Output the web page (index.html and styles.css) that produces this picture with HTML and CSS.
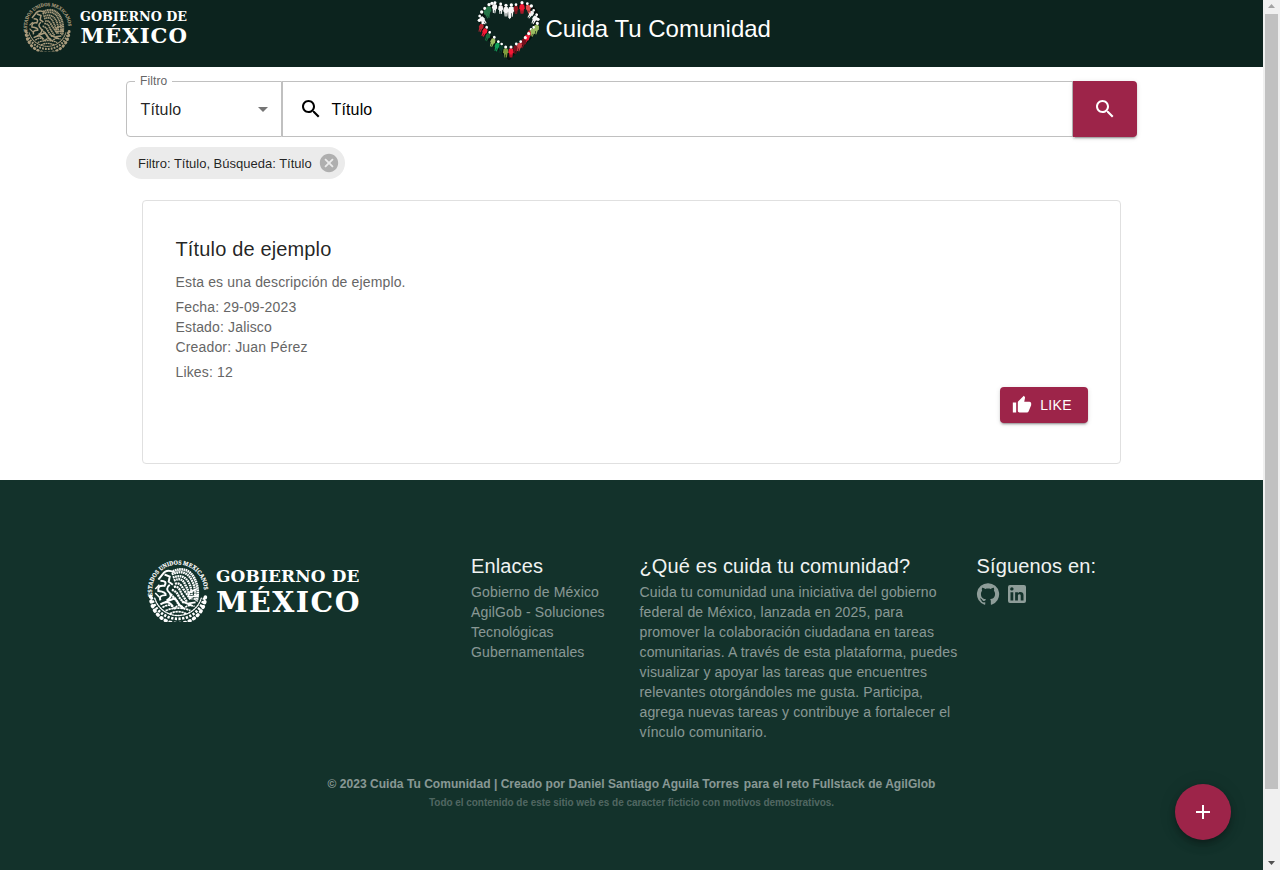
FILE: index.html
```
<!DOCTYPE html>
<html lang="es">
<head>
<meta charset="utf-8">
<title>Cuida Tu Comunidad</title>
<link rel="stylesheet" href="styles.css">
</head>
<body>
<svg class="defs" width="0" height="0" aria-hidden="true">
  <defs>
    <path id="ring" d="M5.400 35A25.200 25.200 0 1 1 54.600 35"/>
    <symbol id="seal" viewBox="0 0 60 60">
      <text class="seal-text"><textPath href="#ring" textLength="84" lengthAdjust="spacingAndGlyphs">ESTADOS UNIDOS MEXICANOS</textPath></text>
      <g fill="none" stroke="currentColor" stroke-linecap="round">
        <path d="M3.500 35A26.500 26.500 0 0 0 56.500 35" stroke-width="3.400" stroke-dasharray=".8 4"/>
        <path d="M4.500 36A26 26 0 0 0 55.500 36" stroke-width="2.600" stroke-dasharray="2.200 1.400" stroke-linecap="butt"/>
        <path d="M7.500 37A23.500 23.500 0 0 0 52.500 37" stroke-width="1.300" stroke-dasharray="1.500 1.200"/>
      </g>
      <g fill="none" stroke="currentColor" stroke-linecap="butt">
        <path d="M25 11Q39 5 46 18Q51 28 48 40" stroke-width="2.600" stroke-dasharray="1.600 .5"/>
        <path d="M24 14Q37 8 43 19Q48 28 46 39M25 17Q35 13 40 21Q44 28 43 38M26 20Q34 16 37 24Q41 31 41 37" stroke-width="2.300" stroke-dasharray="1.700 .55"/>
        <path d="M27 23Q32 21 35 28L42 38M26 26Q31 25 33 32L39 41M24 29Q29 30 31 36L36 42M23 33L30 41" stroke-width="2.200" stroke-dasharray="2 .6"/>
        <path d="M26 12Q19 8 15 14L11 19M17 14L22 16L21 21L25 24M13 20Q20 20 17 25Q10 24 11 30Q19 31 18 34Q11 34 13 39" stroke-width="1.900"/>
        <path d="M22 24Q17 28 22 32Q25 36 19 39M17 41L27 37L32 44M13 43Q21 38 25 45M29 41L35 47M34 40L43 44M40 42L47 41" stroke-width="1.900"/>
        <path d="M15 46Q22 41 27 47Q31 41 36 47Q40 42 46 45M18 49Q30 44 42 49M22 52Q30 48 38 52" stroke-width="1.700" stroke-dasharray="2.300 .6"/>
        <path d="M48 28L40 32M50 34L41 36M12 24L8 28M8 32L12 36" stroke-width="1.500"/>
      </g>
    </symbol>
    <g id="p"><path d="M-7 7Q0 2 7 7L9 19L6 21L4 35H1V25H-1V35H-4L-6 21L-9 19Z"/><circle r="5" fill="#fff"/></g>
    <path id="magnifier" d="M15.500 14h-.79l-.28-.27C15.410 12.590 16 11.110 16 9.500 16 5.910 13.090 3 9.500 3S3 5.910 3 9.500 5.910 16 9.500 16c1.610 0 3.090-.59 4.230-1.570l.27.28v.79l5 4.990L20.490 19l-4.990-5zm-6 0C7.010 14 5 11.990 5 9.500S7.010 5 9.500 5 14 7.010 14 9.500 11.990 14 9.500 14z"/>
  </defs>
</svg>
<div class="window">
  <div class="page">
    <header class="topbar">
      <svg class="gov-small" width="190" height="52" viewBox="0 0 190 52">
        <use href="#seal" x="0" y="2.500" width="49" height="49"/>
        <text class="gov-text" x="57" y="20.500" font-size="13" textLength="107" lengthAdjust="spacingAndGlyphs">GOBIERNO DE</text>
        <text class="gov-text" x="57.500" y="42.800" font-size="21" letter-spacing="1" textLength="107.500" lengthAdjust="spacingAndGlyphs">MÉXICO</text>
      </svg>
      <div class="brand">
        <svg width="63" height="60" viewBox="50 0 189 180">
          <path d="M146 38C120 5 62 14 64 60C66 108 120 142 146 170C170 138 228 108 230 62C231 12 174 5 146 38Z" fill="none" stroke="#06110e" stroke-width="16"/>
          <g fill="#f5f5f5">
            <use href="#p" transform="translate(104 8) rotate(5) scale(.9)"/><use href="#p" transform="translate(121 12) scale(.85)"/><use href="#p" transform="translate(137 16) scale(.95)"/>
            <use href="#p" transform="translate(153 15)"/>
            <use href="#p" transform="translate(220 31) rotate(35) scale(.8)"/><use href="#p" transform="translate(229 44) rotate(25) scale(.85)"/>
            <use href="#p" transform="translate(58 48) rotate(-38) scale(.85)"/>
          </g>
          <path d="M143 26H152V52L148 58L144 52Z" fill="#f5f5f5"/>
          <g fill="#257447"><use href="#p" transform="translate(86 14) rotate(5)"/><use href="#p" transform="translate(73 25) rotate(-22) scale(.9)"/></g>
          <g fill="#92151f"><use href="#p" transform="translate(167 14) scale(.8)"/></g>
          <g fill="#ef1732"><use href="#p" transform="translate(185 8) scale(.95)"/></g>
          <g fill="#df4a4a"><use href="#p" transform="translate(201 11) rotate(-12) scale(.85)"/></g>
          <g fill="#fff"><circle cx="64" cy="36" r="5"/><circle cx="57" cy="61" r="5"/><circle cx="95" cy="10" r="5"/><circle cx="213" cy="18" r="5"/><circle cx="233" cy="58" r="5"/></g>
          <g fill="#bf2632"><use href="#p" transform="translate(67 69) rotate(20) scale(.8)"/><use href="#p" transform="translate(212 88) rotate(20) scale(.8)"/></g>
          <g fill="#f51735"><use href="#p" transform="translate(79 82) rotate(25) scale(.85)"/><use href="#p" transform="translate(205 101) rotate(25) scale(.95)"/></g>
          <g fill="#176a3c"><use href="#p" transform="translate(88 97) rotate(25) scale(.8)"/></g>
          <g fill="#9bbc60"><use href="#p" transform="translate(102 112) rotate(20) scale(.85)"/><use href="#p" transform="translate(231 70) rotate(12) scale(.95)"/><use href="#p" transform="translate(220 82) rotate(12) scale(.8)"/></g>
          <g fill="#12a05a"><use href="#p" transform="translate(114 125) rotate(16) scale(.85)"/></g>
          <g fill="#073c29"><use href="#p" transform="translate(124 132) rotate(8) scale(.8)"/></g>
          <g fill="#7d9c3d"><use href="#p" transform="translate(136 141) scale(.9)"/></g>
          <g fill="#77101c"><use href="#p" transform="translate(195 113) rotate(22) scale(.95)"/><use href="#p" transform="translate(168 132) rotate(8) scale(.85)"/></g>
          <g fill="#cf3d44"><use href="#p" transform="translate(181 125) rotate(15) scale(.85)"/></g>
          <g fill="#f51735"><use href="#p" transform="translate(152 141) scale(.9)"/></g>
        </svg>
        <h1 class="brand-name">Cuida Tu Comunidad</h1>
      </div>
    </header>

    <main class="content">
      <form class="search">
        <fieldset class="select">
          <legend>Filtro</legend>
          <span>Título</span>
          <svg width="24" height="24" viewBox="0 0 24 24"><path d="M7 10l5 5 5-5z" fill="#757575"/></svg>
        </fieldset>
        <div class="query">
          <svg width="24" height="24" viewBox="0 0 24 24"><use href="#magnifier"/></svg>
          <span>Título</span>
        </div>
        <button class="go" type="button"><svg width="24" height="24" viewBox="0 0 24 24" fill="#fff"><use href="#magnifier"/></svg></button>
      </form>
      <div class="chip"><span>Filtro: Título, Búsqueda: Título</span>
        <svg width="22" height="22" viewBox="0 0 24 24" fill="#afafaf"><path d="M12 2C6.470 2 2 6.470 2 12s4.470 10 10 10 10-4.470 10-10S17.530 2 12 2zm5 13.590L15.590 17 12 13.410 8.410 17 7 15.590 10.590 12 7 8.410 8.410 7 12 10.590 15.590 7 17 8.410 13.410 12 17 15.590z"/></svg>
      </div>
      <article class="card">
        <h2>Título de ejemplo</h2>
        <p>Esta es una descripción de ejemplo.</p>
        <p>Fecha: 29-09-2023<br>Estado: Jalisco<br>Creador: Juan Pérez</p>
        <p>Likes: 12</p>
        <button class="like" type="button"><svg width="20" height="20" viewBox="0 0 24 24" fill="#fff"><path d="M1 21h4V9H1v12zm22-11c0-1.100-.9-2-2-2h-6.310l.95-4.570.03-.32c0-.41-.17-.79-.44-1.060L14.170 1 7.590 7.590C7.220 7.950 7 8.450 7 9v10c0 1.100.9 2 2 2h9c.83 0 1.540-.5 1.840-1.220l3.020-7.050c.09-.23.14-.47.14-.73v-2z"/></svg>LIKE</button>
      </article>
    </main>

    <footer class="footer">
      <div class="columns">
        <svg class="gov-large" width="250" height="64" viewBox="0 0 250 64">
          <use href="#seal" x="0" y="0" width="62" height="62"/>
          <text class="gov-text" x="69" y="21.500" font-size="17" textLength="143.500" lengthAdjust="spacingAndGlyphs">GOBIERNO DE</text>
          <text class="gov-text" x="69" y="52" font-size="28.500" letter-spacing="1.500" textLength="145" lengthAdjust="spacingAndGlyphs">MÉXICO</text>
        </svg>
        <section class="links"><h3>Enlaces</h3><a>Gobierno de México</a><a>AgilGob - Soluciones Tecnológicas Gubernamentales</a></section>
        <section><h3>¿Qué es cuida tu comunidad?</h3><p>Cuida tu comunidad una iniciativa del gobierno federal de México, lanzada en 2025, para promover la colaboración ciudadana en tareas comunitarias. A través de esta plataforma, puedes visualizar y apoyar las tareas que encuentres relevantes otorgándoles me gusta. Participa, agrega nuevas tareas y contribuye a fortalecer el vínculo comunitario.</p></section>
        <section><h3>Síguenos en:</h3>
          <div class="social">
            <svg width="24" height="24" viewBox="0 0 24 24"><path d="M12 1.270a11 11 0 00-3.480 21.460c.55.09.73-.28.73-.55v-1.840c-3.030.64-3.670-1.460-3.670-1.460-.55-1.290-1.280-1.650-1.280-1.650-.92-.65.1-.65.1-.65 1.100 0 1.730 1.100 1.730 1.100.92 1.650 2.570 1.200 3.210.92a2 2 0 01.64-1.470c-2.470-.27-5.040-1.190-5.040-5.500 0-1.100.46-2.100 1.200-2.840a3.760 3.760 0 010-2.930s.91-.28 3.110 1.100c1.800-.49 3.700-.49 5.500 0 2.100-1.380 3.020-1.100 3.020-1.100a3.760 3.760 0 01.1 2.930c.74.74 1.190 1.740 1.190 2.940 0 4.210-2.570 5.130-5.040 5.400.45.37.82.92.82 2.020v3.030c0 .27.1.64.73.55A11 11 0 0012 1.270"/></svg>
            <svg width="24" height="24" viewBox="0 0 24 24"><path d="M19 3a2 2 0 0 1 2 2v14a2 2 0 0 1-2 2H5a2 2 0 0 1-2-2V5a2 2 0 0 1 2-2h14m-.5 15.500v-5.300a3.260 3.260 0 0 0-3.260-3.260c-.85 0-1.840.52-2.320 1.300v-1.110h-2.790v8.370h2.790v-4.930c0-.77.62-1.400 1.390-1.400a1.400 1.400 0 0 1 1.400 1.400v4.930h2.790M6.880 8.560a1.680 1.680 0 0 0 1.680-1.680c0-.93-.75-1.690-1.680-1.690a1.690 1.690 0 0 0-1.690 1.690c0 .93.76 1.680 1.690 1.680m1.390 9.940v-8.370H5.500v8.370h2.770z"/></svg>
          </div>
        </section>
      </div>
      <p class="copyright">© 2023 Cuida Tu Comunidad | Creado por Daniel Santiago Aguila Torres <span>para el reto Fullstack de AgilGlob</span></p>
      <p class="notice">Todo el contenido de este sitio web es de caracter ficticio con motivos demostrativos.</p>
    </footer>
    <button class="fab" type="button"><svg width="24" height="24" viewBox="0 0 24 24" fill="#fff"><path d="M19 13h-6v6h-2v-6H5v-2h6V5h2v6h6v2z"/></svg></button>
  </div>
  <div class="scrollbar">
    <svg width="17" height="14" viewBox="0 0 17 14"><path d="M8.500 4L12 8H5z" fill="#a3a3a3"/></svg>
    <div class="thumb"></div>
    <svg class="down" width="17" height="14" viewBox="0 0 17 14"><path d="M5 5H12L8.500 9z" fill="#505050"/></svg>
  </div>
</div>
</body>
</html>
```

FILE: styles.css
```
* { box-sizing: border-box; }
body { margin: 0; font-family: "Liberation Sans", Arial, sans-serif; color: rgba(0,0,0,.87); }
h1, h2, h3, p { margin: 0; font-weight: 400; }
button { border: 0; color: #fff; background: #9d2449; font: inherit; display: flex; align-items: center; justify-content: center; padding: 0; }
.defs { position: absolute; }
.window { display: flex; width: 1280px; height: 870px; overflow: hidden; }
.page { width: 1263px; position: relative; display: flex; flex-direction: column; }

.topbar { height: 67px; background: #0c231e; color: #fff; display: flex; padding-left: 23px; flex: none; }
.gov-small { color: #a99b7c; }
.gov-text { fill: #fff; font-family: "DejaVu Serif", serif; font-weight: 700; }
.seal-text { fill: currentColor; stroke: currentColor; stroke-width: .2px; font: 700 6px "Liberation Serif", serif; }
.brand { display: flex; margin-left: 263.500px; height: 60px; }
.brand-name { font-size: 24px; line-height: 32px; margin: 13px 0 0 6px; }

.content { width: 1011px; margin: 14px auto 0; flex: none; height: 399px; }
.search { display: flex; height: 56px; font-size: 16px; letter-spacing: .15px; }
.select { width: 156px; margin: -5px 0 0; height: 61px; border: 1px solid #c0c0c0; border-radius: 4px 0 0 4px; padding: 0 6px 5px 13.500px; display: flex; align-items: center; justify-content: space-between; min-width: 0; }
.select legend { font-size: 12px; line-height: 11px; letter-spacing: .11px; color: #666; margin-left: -5.500px; padding: 0 5px; height: 11px; }
.select span { margin-top: 2px; }
.query { flex: 1; border: 1px solid #c0c0c0; display: flex; align-items: center; padding-left: 16px; color: #000; }
.query span { margin: 1px 0 0 8.500px; }
.go { width: 64px; border-radius: 0 4px 4px 0; }
.go, .like { box-shadow: 0 3px 1px -2px rgba(0,0,0,.2), 0 2px 2px rgba(0,0,0,.14), 0 1px 5px rgba(0,0,0,.12); }
.chip { width: 219px; height: 32px; border-radius: 16px; background: #ebebeb; margin-top: 10px; display: flex; align-items: center; padding: 0 5px 0 12px; justify-content: space-between; font-size: 13px; }
.card { margin: 21px 16px 0; height: 264px; border: 1px solid #e0e0e0; border-radius: 4px; padding: 32px 32px 0 32.500px; display: flex; flex-direction: column; font-size: 14px; line-height: 20px; letter-spacing: .15px; color: #666; }
.card h2 { font-size: 20px; line-height: 32px; letter-spacing: .15px; margin-bottom: 7px; color: rgba(0,0,0,.87); }
.card p { margin-bottom: 5px; }
.like { align-self: flex-end; width: 88px; height: 36px; border-radius: 4px; font-size: 14px; letter-spacing: .3px; }
.like svg { margin-right: 8px; margin-left: -4px; }

.footer { background: #13322b; flex: 1; padding-top: 70px; color: rgba(255,255,255,.5); }
.columns { display: grid; grid-template-columns: 336.700px 168.500px 337px 168px; margin-left: 134.300px; height: 224px; font-size: 14px; line-height: 20px; letter-spacing: .15px; }
.columns section { padding-right: 16px; }
.columns h3 { color: #f0f3f2; font-size: 20px; line-height: 32px; letter-spacing: .15px; white-space: nowrap; }
.gov-large { color: #fff; margin: 10px 0 0 12.700px; }
.links a { display: block; }
.social { display: flex; gap: 5.500px; fill: rgba(255,255,255,.52); }
.social svg { margin-left: -.3px; }
.copyright, .notice { text-align: center; font-weight: 700; }
.copyright { font-size: 12px; line-height: 20px; letter-spacing: .04px; }
.copyright span { margin-left: 1.500px; }
.notice { font-size: 10px; line-height: 18px; letter-spacing: -.045px; color: rgba(255,255,255,.27); }
.fab { position: absolute; right: 32px; bottom: 30px; width: 56px; height: 56px; border-radius: 50%; box-shadow: 0 3px 5px -1px rgba(0,0,0,.2), 0 6px 10px rgba(0,0,0,.14), 0 1px 18px rgba(0,0,0,.12); }

.scrollbar { width: 17px; background: #f0f0f0; display: flex; flex-direction: column; align-items: center; }
.scrollbar svg { flex: none; }
.thumb { width: 13px; height: 775px; background: #c1c1c1; }
.down { margin-top: auto; }
```
